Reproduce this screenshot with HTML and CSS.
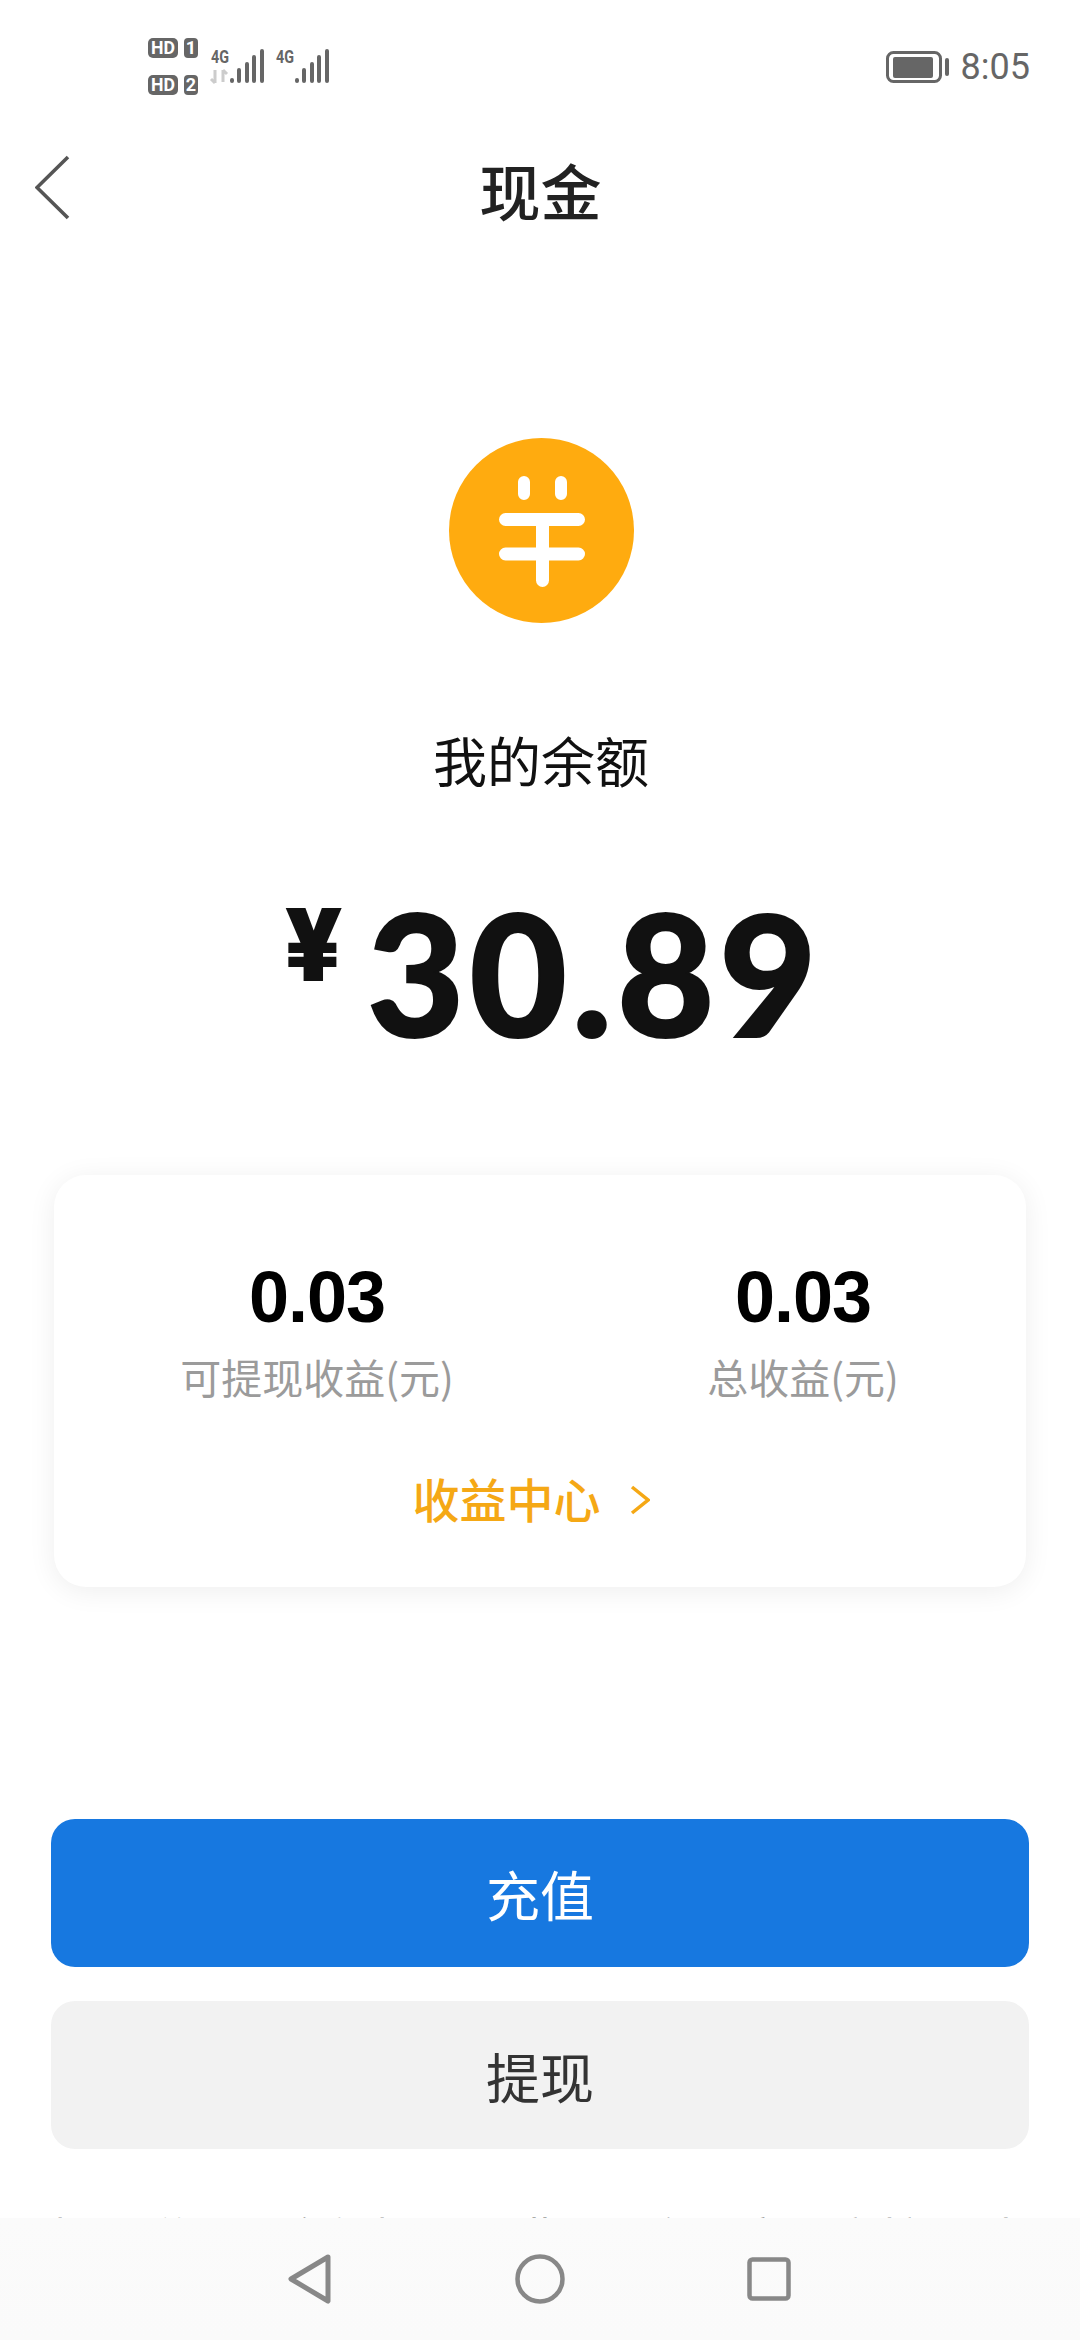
FILE: index.html
```html
<!DOCTYPE html>
<html lang="zh-CN">
<head>
<meta charset="UTF-8" />
<meta name="viewport" content="width=device-width, initial-scale=1" />
<title>现金</title>
<link rel="stylesheet" href="styles.css">
</head>
<body>
  <div class="status">
    <svg class="signals" width="182" height="60" viewBox="0 0 182 60">
      <rect x="0" y="0" width="30" height="20" rx="5" fill="#666"/>
      <rect x="36" y="0" width="14" height="20" rx="4" fill="#666"/>
      <rect x="0" y="37" width="30" height="20" rx="5" fill="#666"/>
      <rect x="36" y="37" width="14" height="20" rx="4" fill="#666"/>
      <text class="sig-hd" x="15" y="16" textLength="24" lengthAdjust="spacingAndGlyphs">HD</text>
      <text class="sig-hd" x="43" y="16">1</text>
      <text class="sig-hd" x="15" y="53" textLength="24" lengthAdjust="spacingAndGlyphs">HD</text>
      <text class="sig-hd" x="43" y="53">2</text>
      <text class="sig-net" x="63" y="25" textLength="18" lengthAdjust="spacingAndGlyphs">4G</text>
      <text class="sig-net" x="128" y="25" textLength="18" lengthAdjust="spacingAndGlyphs">4G</text>
      <path d="M67 32v13M63 41l4 4M75 44V32M79 36l-4-4" stroke="#ccc" stroke-width="3" fill="none"/>
      <g stroke="#666" stroke-width="4" stroke-linecap="round">
        <path d="M84 42v1M91 32v11M99 26v17M106 19v24M114 13v30"/>
        <path d="M149 42v1M156 32v11M164 26v17M171 19v24M179 13v30"/>
      </g>
    </svg>
    <div class="status-right">
      <svg width="64" height="32" viewBox="0 0 64 32">
        <rect x="1.500" y="1.500" width="53" height="29" rx="6" fill="none" stroke="#666" stroke-width="3"/>
        <rect x="7" y="6" width="40" height="21" rx="2" fill="#666"/>
        <rect x="59" y="7" width="4" height="18" rx="2" fill="#666"/>
      </svg>
      <span class="time">8:05</span>
    </div>
  </div>

  <header class="topbar">
    <svg class="back" width="36" height="66" viewBox="0 0 36 66">
      <path d="M33 2L2 32.500L33 63" fill="none" stroke="#555" stroke-width="3.600"/>
    </svg>
    <h1 class="title">现金</h1>
  </header>

  <section class="hero">
    <svg class="coin" width="185" height="185" viewBox="0 0 185 185">
      <circle cx="92.500" cy="92.500" r="92.500" fill="#ffab0f"/>
      <g stroke="#fff" stroke-linecap="round" fill="none">
        <path d="M75 44v12M112 44v12" stroke-width="12"/>
        <path d="M56.500 81.500h73M56.500 116h73" stroke-width="13"/>
        <path d="M93.500 82v60.500" stroke-width="13"/>
      </g>
    </svg>
    <div class="hero-label">我的余额</div>
    <div class="amount"><span class="yen">¥</span><span class="num">30.89</span></div>
  </section>

  <section class="card">
    <div class="stats">
      <div class="stat">
        <div class="stat-num">0.03</div>
        <div class="stat-label">可提现收益(元)</div>
      </div>
      <div class="stat">
        <div class="stat-num">0.03</div>
        <div class="stat-label">总收益(元)</div>
      </div>
    </div>
    <a class="link">收益中心
      <svg width="20" height="30" viewBox="0 0 20 30">
        <path d="M2 2L18 15L2 28" fill="none" stroke="#f5a815" stroke-width="3.500"/>
      </svg>
    </a>
  </section>

  <div class="actions">
    <button class="btn primary">充值</button>
    <button class="btn plain">提现</button>
  </div>
  <p class="note">提现说明：余额提现需满足平台规定，审核通过后将在三个工作日内到账，如有疑问请联系客服。</p>

  <nav class="navbar">
    <svg width="44" height="50" viewBox="0 0 44 50">
      <path d="M40 3L3 25L40 47Z" fill="none" stroke="#888" stroke-width="5" stroke-linejoin="round"/>
    </svg>
    <svg width="50" height="50" viewBox="0 0 50 50">
      <circle cx="25" cy="25" r="22.500" fill="none" stroke="#888" stroke-width="4.500"/>
    </svg>
    <svg width="44" height="44" viewBox="0 0 44 44">
      <rect x="2.500" y="2.500" width="39" height="39" rx="3" fill="none" stroke="#888" stroke-width="4.500"/>
    </svg>
  </nav>
</body>
</html>
```

FILE: styles.css
```css
*{box-sizing:border-box}
html,body{height:100%}
body{
  margin:0;
  width:1080px;
  height:2340px;
  position:relative;
  overflow:hidden;
  background:#fff;
  color:#111;
  font-family:"Noto Sans CJK SC","Noto Sans",sans-serif;
}

/* Status bar */
.status{
  height:130px;
  padding:38px 50px 0 148px;
  display:flex;
  justify-content:space-between;
  align-items:flex-start;
}
.signals text{font-family:"Roboto",sans-serif;font-weight:700;}
.sig-hd{font-size:18px;fill:#fff;text-anchor:middle;}
.sig-net{font-size:19px;fill:#666;}
.status-right{
  display:flex;
  align-items:center;
  gap:11px;
  margin-top:7px;
}
.time{
  font-family:"Roboto",sans-serif;
  font-size:36px;
  line-height:44px;
  color:#666;
}

/* Top bar */
.topbar{
  height:120px;
  padding-left:35px;
  display:grid;
  grid-template-columns:1fr auto 1fr;
  align-items:center;
}
.back{display:block;margin-top:-4px;}
.title{
  margin:0;
  font-size:61px;
  font-weight:500;
  line-height:120px;
  color:#222;
  transform:translateX(-17px);
}

/* Balance */
.hero{
  display:flex;
  flex-direction:column;
  align-items:center;
  padding:188px 0 0 2px;
}
.coin{display:block;}
.hero-label{
  margin-top:94px;
  font-size:54px;
  line-height:86px;
}
.amount{
  margin:87px 0 0 24px;
  height:164px;
  display:flex;
  align-items:flex-start;
  gap:24px;
  font-weight:900;
  color:#111;
}
.yen{font-family:"Inter",sans-serif;font-size:100px;line-height:100px;margin-top:5px;}
.num{
  font-family:"Lato",sans-serif;
  font-size:168px;
  line-height:164px;
  letter-spacing:5px;
  -webkit-text-stroke:2px #111;
}

/* Earnings card */
.card{
  margin:121px 54px 0;
  height:412px;
  padding-top:84px;
  border-radius:32px;
  background:#fff;
  box-shadow:0 4px 28px rgba(0,0,0,.07);
}
.stats{
  display:grid;
  grid-template-columns:526px 1fr;
}
.stat{text-align:center;}
.stat-num{
  font-family:"Liberation Sans",sans-serif;
  font-weight:700;
  font-size:72px;
  line-height:76px;
  letter-spacing:-1px;
  color:#000;
}
.stat-label{
  margin-top:12px;
  font-size:41px;
  line-height:58px;
  color:#9b9b9b;
}
.link{
  margin-top:60px;
  padding-right:18px;
  display:flex;
  justify-content:center;
  align-items:center;
  gap:29px;
  font-size:47px;
  font-weight:500;
  line-height:66px;
  color:#f5a815;
}
.link svg{margin-top:3px;}

/* Buttons */
.actions{
  margin:232px 51px 0;
  display:flex;
  flex-direction:column;
  gap:34px;
}
.btn{
  height:148px;
  border:0;
  border-radius:24px;
  font-family:inherit;
  font-size:54px;
}
.primary{background:#1778e0;color:#fff;}
.plain{background:#f2f2f2;color:#333;}

.note{
  margin:54px 51px 0;
  font-size:46px;
  line-height:66px;
  color:#999;
}

/* Bottom navigation */
.navbar{
  position:absolute;
  left:0;
  right:0;
  bottom:0;
  height:122px;
  padding:0 289px 0 288px;
  display:flex;
  justify-content:space-between;
  align-items:center;
  background:linear-gradient(180deg,#fbfbfb,#fafafa);
}
```
